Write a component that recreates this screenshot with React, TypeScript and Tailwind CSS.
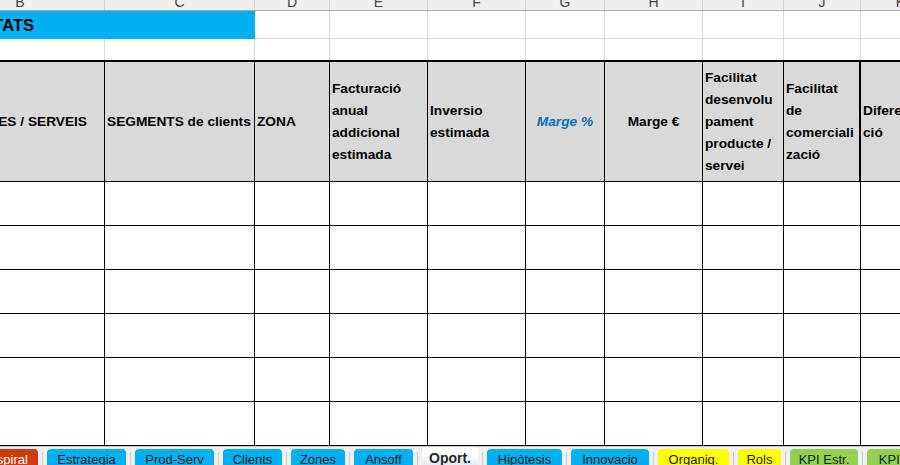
import React from 'react'

const cols = 'grid grid-cols-[169px_150px_75px_98px_98px_79px_98px_81px_77px_80px]'

const letters = ['B', 'C', 'D', 'E', 'F', 'G', 'H', 'I', 'J', 'K']

type Head = { lines: string[]; center?: boolean; blue?: boolean }

const heads: Head[] = [
    { lines: ['PRODUCTES / SERVEIS'] },
    { lines: ['SEGMENTS de clients'] },
    { lines: ['ZONA'] },
    { lines: ['Facturació', 'anual', 'addicional', 'estimada'] },
    { lines: ['Inversio', 'estimada'] },
    { lines: ['Marge %'], center: true, blue: true },
    { lines: ['Marge €'], center: true },
    { lines: ['Facilitat', 'desenvolu', 'pament', 'producte /', 'servei'] },
    { lines: ['Facilitat', 'de', 'comerciali', 'zació'] },
    { lines: ['Diferencia', 'ció'] },
]

type Tab = { name: string; w: string; bg: string; text?: string; active?: boolean }

const tabs: Tab[] = [
    { name: 'Espiral', w: 'w-[60px]', bg: 'bg-[#cf3b0c]', text: 'text-white' },
    { name: 'Estrategia', w: 'w-[79px]', bg: 'bg-[#00b0f0]' },
    { name: 'Prod-Serv', w: 'w-[79px]', bg: 'bg-[#00b0f0]' },
    { name: 'Clients', w: 'w-[59px]', bg: 'bg-[#00b0f0]' },
    { name: 'Zones', w: 'w-[54px]', bg: 'bg-[#00b0f0]' },
    { name: 'Ansoff', w: 'w-[59px]', bg: 'bg-[#00b0f0]' },
    { name: 'Oport.', w: 'w-[56px]', bg: '', active: true },
    { name: 'Hipòtesis', w: 'w-[75px]', bg: 'bg-[#00b0f0]' },
    { name: 'Innovacio', w: 'w-[78px]', bg: 'bg-[#00b0f0]' },
    { name: 'Organig.', w: 'w-[71px]', bg: 'bg-[#ffff00]' },
    { name: 'Rols', w: 'w-[43px]', bg: 'bg-[#ffff00]' },
    { name: 'KPI Estr.', w: 'w-[68px]', bg: 'bg-[#92d050]' },
    { name: 'KPI Oper.', w: 'w-[80px]', bg: 'bg-[#92d050]' },
]

export default function App() {
    return (
        <div className="w-[900px] h-[465px] overflow-hidden bg-white flex flex-col font-['Liberation_Sans',Arial,sans-serif]">
            <div className="h-[446px] overflow-hidden">
                <div className="w-[1005px] -ml-[64px]">
                    {/* column letters */}
                    <div className={`${cols} h-[11px] bg-[#efefef] border-b border-[#a9a9a9]`}>
                        {letters.map((l) => (
                            <div key={l} className="border-r border-[#d4d4d4] overflow-hidden text-center">
                                <div className="text-[14px] leading-none -mt-[5px] text-[#444]">{l}</div>
                            </div>
                        ))}
                    </div>

                    {/* title row */}
                    <div className={`${cols} h-[28px]`}>
                        <div className="col-span-2 bg-[#00b0f0] flex items-center">
                            <div className="w-[98px] flex justify-end">
                                <span className="whitespace-nowrap font-bold text-[16.5px] text-black">OPORTUNITATS</span>
                            </div>
                        </div>
                        {letters.slice(2).map((l) => (
                            <div key={l} className="border-r border-b border-[#d9d9d9]"></div>
                        ))}
                    </div>

                    {/* empty row */}
                    <div className={`${cols} h-[21px]`}>
                        {letters.map((l) => (
                            <div key={l} className="border-r border-[#d9d9d9]"></div>
                        ))}
                    </div>

                    {/* table header */}
                    <div className={`${cols} h-[122px] border-t-2 border-b border-black bg-[#d9d9d9]`}>
                        {heads.map((h, i) => (
                            <div
                                key={i}
                                className={`flex flex-col justify-center px-[2px] overflow-hidden border-black text-[13.7px] font-bold leading-[22px] ${i === 8 ? 'border-r-2' : 'border-r'} ${h.center ? 'items-center' : 'items-start'} ${h.blue ? 'italic text-[#0070c0]' : 'text-black'}`}
                            >
                                {i === 0 ? (
                                    <div className="w-[149px] flex justify-end">
                                        <span className="whitespace-nowrap">{h.lines[0]}</span>
                                    </div>
                                ) : (
                                    h.lines.map((t, j) => (
                                        <span key={j} className="whitespace-nowrap">{t}</span>
                                    ))
                                )}
                            </div>
                        ))}
                    </div>

                    {/* data rows */}
                    {[0, 1, 2, 3, 4, 5, 6].map((r) => (
                        <div key={r} className={`${cols} h-[44px] border-b border-black`}>
                            {letters.map((l) => (
                                <div key={l} className="border-r border-black"></div>
                            ))}
                        </div>
                    ))}
                </div>
            </div>

            {/* sheet tabs */}
            <div className="h-[19px] bg-[#f0f0f0] border-t border-[#c6c6c6] flex items-start overflow-hidden">
                {tabs.map((t, i) => (
                    <React.Fragment key={t.name}>
                        {t.active ? (
                            <div className={`${t.w} shrink-0 -mt-px h-[20px] rounded-t-[4px] bg-linear-to-b from-white via-white to-[#dcedf8] text-center pt-[4px] text-[14px] leading-[16px] font-bold text-[#262626] whitespace-nowrap`}>
                                {t.name}
                            </div>
                        ) : (
                            <div className={`${t.w} ${t.bg} ${t.text ?? 'text-[#1b1b1b]'} ${i === 0 ? '-ml-[22px]' : ''} shrink-0 mt-[2px] h-[20px] rounded-t-[4px] text-center pt-[3px] text-[13px] leading-[16px] whitespace-nowrap`}>
                                {t.name}
                            </div>
                        )}
                        <div className="shrink-0 ml-[4px] mr-[4px] mt-[5px] w-px h-[14px] bg-[#c8c8c8]"></div>
                    </React.Fragment>
                ))}
            </div>
        </div>
    )
}
